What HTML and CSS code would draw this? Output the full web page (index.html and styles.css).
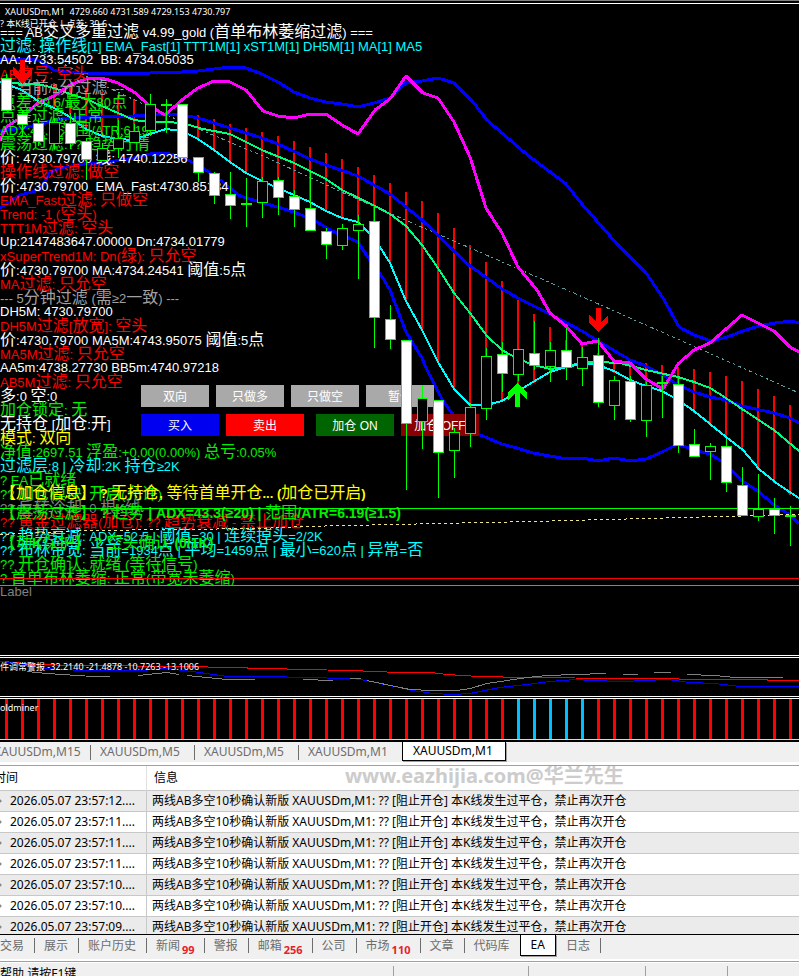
FILE: index.html
```html
<!DOCTYPE html>
<html lang="zh-CN">
<head>
<meta charset="utf-8">
<title>XAUUSDm,M1</title>
<link rel="stylesheet" href="styles.css">
</head>
<body>
<main class="charts">
  <section class="pane pane-price">
    <svg class="layer" id="lines" aria-hidden="true"></svg>
    <ul class="log">
      <li>=== AB交叉多重过滤 v4.99_gold (首单布林萎缩过滤) ===</li>
      <li class="cyan">过滤: 操作线[1] EMA_Fast[1] TTT1M[1] xST1M[1] DH5M[1] MA[1] MA5</li>
      <li>AA: 4733.54502  BB: 4734.05035</li>
      <li class="red">AB信号: 空头</li>
      <li class="gray">--- 当前/1分过滤 ---</li>
      <li class="green">点差:39.6/最大80点</li>
      <li class="green">点差过滤: 正常</li>
      <li class="green">ADX:43.3 范围/ATR:6.19</li>
      <li class="green">震荡过滤:?? 趋势行情</li>
      <li>价: 4730.79700 线: 4740.12256</li>
      <li class="red">操作线过滤: 做空</li>
      <li>价:4730.79700  EMA_Fast:4730.85184</li>
      <li class="red">EMA_Fast过滤: 只做空</li>
      <li class="red">Trend: -1 (空头)</li>
      <li class="red">TTT1M过滤: 空头</li>
      <li>Up:2147483647.00000 Dn:4734.01779</li>
      <li class="red">xSuperTrend1M: Dn(绿): 只允空</li>
      <li>价:4730.79700 MA:4734.24541 阈值:5点</li>
      <li class="red">MA过滤: 只允空</li>
      <li class="gray">--- 5分钟过滤 (需≥2一致) ---</li>
      <li>DH5M: 4730.79700</li>
      <li class="red">DH5M过滤[放宽]: 空头</li>
      <li>价:4730.79700 MA5M:4743.95075 阈值:5点</li>
      <li class="red">MA5M过滤: 只允空</li>
      <li>AA5m:4738.27730 BB5m:4740.97218</li>
      <li class="red">AB5M过滤: 只允空</li>
      <li>多:0 空:0</li>
      <li class="green">加仓锁定: 无</li>
      <li>无持仓 [加仓:开]</li>
      <li class="yellow">模式: 双向</li>
      <li class="green">净值:2697.51 浮盈:+0.00(0.00%) 总亏:0.05%</li>
      <li class="cyan">过滤层:8 | 冷却:2K 持仓≥2K</li>
      <li class="green">? EA已就绪</li>
      <li class="green">?? 加仓模块: 开启(允许)</li>
      <li class="dim">?? 反转冷却: 0 根K线</li>
      <li class="red">?? 黄金过滤器(加仓): ?? 趋势衰减 - 禁止加仓</li>
      <li class="cyan">?? 趋势衰减: ADX=52.5 | 阈值=30 | 连续掉头=2/2K</li>
      <li class="cyan">?? 布林带宽: 当前=1934点 | 平均=1459点 | 最小=620点 | 异常=否</li>
      <li class="green">?? 开仓确认: 就绪 (等待信号)</li>
      <li class="green">? 首单布林萎缩: 正常(带宽未萎缩)</li>
      <li class="dim">Label</li>
    </ul>
    <ul class="alerts">
      <li class="yellow">【加仓信息】 ? 无持仓, 等待首单开仓... (加仓已开启)</li>
      <li class="green">【震荡过滤】 ? 趋势 | ADX=43.3(≥20) | 范围/ATR=6.19(≥1.5)</li>
      <li class="green">【动K保护】 ? 空头确认 (0/1K)</li>
    </ul>
    <div class="controls">
      <div class="row">
        <button type="button" class="btn mode">双向</button>
        <button type="button" class="btn mode">只做多</button>
        <button type="button" class="btn mode">只做空</button>
        <button type="button" class="btn mode">暂停</button>
      </div>
      <div class="row">
        <button type="button" class="btn buy">买入</button>
        <button type="button" class="btn sell">卖出</button>
        <button type="button" class="btn on">加仓 ON</button>
        <button type="button" class="btn off">加仓 OFF</button>
      </div>
    </div>
    <svg class="layer" id="candles" aria-hidden="true"></svg>
    <div class="heading">
      <p class="quote">XAUUSDm,M1&nbsp; 4729.660 4731.589 4729.153 4730.797</p>
      <p class="note">? 本K线已开仓 | 点差: 39.6</p>
    </div>
  </section>
  <section class="pane pane-osc">
    <svg class="layer" id="osc" aria-hidden="true"></svg>
    <p class="caption">件调常警报 -32.2140 -21.4878 -10.7263 -13.1006</p>
  </section>
  <section class="pane pane-bars">
    <svg class="layer" id="bars" aria-hidden="true"></svg>
    <p class="caption bars-name">oldminer</p>
  </section>
</main>

<nav class="chart-tabs">
  <button type="button">XAUUSDm,M15</button>
  <button type="button">XAUUSDm,M5</button>
  <button type="button">XAUUSDm,M5</button>
  <button type="button" class="last">XAUUSDm,M1</button>
  <button type="button" class="active">XAUUSDm,M1</button>
</nav>

<section class="terminal">
  <table>
    <thead><tr><th class="time">时间</th><th>信息</th></tr></thead>
    <tbody>
      <tr><td class="time">2026.05.07 23:57:12....</td><td>两线AB多空10秒确认新版 XAUUSDm,M1: ?? [阻止开仓] 本K线发生过平仓，禁止再次开仓</td></tr>
      <tr><td class="time">2026.05.07 23:57:11....</td><td>两线AB多空10秒确认新版 XAUUSDm,M1: ?? [阻止开仓] 本K线发生过平仓，禁止再次开仓</td></tr>
      <tr><td class="time">2026.05.07 23:57:11....</td><td>两线AB多空10秒确认新版 XAUUSDm,M1: ?? [阻止开仓] 本K线发生过平仓，禁止再次开仓</td></tr>
      <tr><td class="time">2026.05.07 23:57:11....</td><td>两线AB多空10秒确认新版 XAUUSDm,M1: ?? [阻止开仓] 本K线发生过平仓，禁止再次开仓</td></tr>
      <tr><td class="time">2026.05.07 23:57:10....</td><td>两线AB多空10秒确认新版 XAUUSDm,M1: ?? [阻止开仓] 本K线发生过平仓，禁止再次开仓</td></tr>
      <tr><td class="time">2026.05.07 23:57:10....</td><td>两线AB多空10秒确认新版 XAUUSDm,M1: ?? [阻止开仓] 本K线发生过平仓，禁止再次开仓</td></tr>
      <tr><td class="time">2026.05.07 23:57:09....</td><td>两线AB多空10秒确认新版 XAUUSDm,M1: ?? [阻止开仓] 本K线发生过平仓，禁止再次开仓</td></tr>
    </tbody>
  </table>
  <p class="watermark">www.eazhijia.com@华兰先生</p>
</section>

<nav class="terminal-tabs">
  <button type="button">交易</button>
  <button type="button">展示</button>
  <button type="button">账户历史</button>
  <button type="button">新闻<b>99</b></button>
  <button type="button">警报</button>
  <button type="button">邮箱<b>256</b></button>
  <button type="button">公司</button>
  <button type="button">市场<b>110</b></button>
  <button type="button">文章</button>
  <button type="button" class="last">代码库</button>
  <button type="button" class="active">EA</button>
  <button type="button">日志</button>
</nav>

<footer class="status">
  <span class="help">帮助,请按F1键</span>
  <span class="cell wide"></span>
  <span class="cell mid"></span>
  <span class="cell small"></span>
  <span class="cell"></span>
</footer>
<script src="chart.js"></script>
</body>
</html>
```
FILE: styles.css
```css
* { box-sizing: border-box; }

body {
  margin: 0;
  height: 100vh;
  display: flex;
  flex-direction: column;
  overflow: hidden;
  background: #f0f0f0;
  font: 12px/20px "Noto Sans", "Noto Sans CJK SC", sans-serif;
  color: #000;
}

p, ul { margin: 0; padding: 0; list-style: none; }

button {
  margin: 0;
  border: 0;
  padding: 0;
  font: inherit;
  white-space: nowrap;
}

/* Chart window */
.charts {
  flex: none;
  background: #000;
  border-top: 1px solid #808080;
  border-bottom: 2px solid #000;
  padding-top: 2px;
}

.pane {
  position: relative;
  overflow: hidden;
  border-top: 1px solid #fff;
  border-bottom: 1px solid #fff;
  margin-bottom: 1px;
  color: #fff;
}

.pane-price { height: 653px; }
.pane-osc { height: 40px; }
.pane-bars { height: 42px; margin-bottom: 0; border-bottom-color: #d8d8d8; }

.layer {
  position: absolute;
  inset: 0;
  width: 100%;
  height: 100%;
  pointer-events: none;
  shape-rendering: crispEdges;
}

.heading {
  position: absolute;
  top: 2px;
  left: 0;
  font-size: 9px;
  line-height: 12px;
  white-space: nowrap;
}

.quote { padding-left: 5px; }

.log, .alerts {
  position: absolute;
  left: 0;
  top: 21px;
  font: 13px/14px "Liberation Sans", "Noto Sans CJK SC", sans-serif;
}

.log li, .alerts li { white-space: pre; }
.log li { height: 14px; }

.alerts {
  top: 482px;
  font-weight: bold;
}

.alerts li { height: 20px; }
.alerts .green { font-size: 14px; }
.alerts li:last-child { margin-top: 10px; }

.log .han, .alerts .han { font-size: 16px; font-weight: normal; }

.cyan { color: #00ffff; }
.red { color: #ff0000; }
.green { color: #00f000; }
.yellow { color: #ffff00; }
.gray { color: #a0a0a0; }
.dim { color: #808080; }

.controls {
  position: absolute;
  left: 141px;
  top: 381px;
  display: grid;
  gap: 7px;
}

.row { display: flex; gap: 7px; }

.btn {
  width: 78px;
  height: 22px;
  padding-top: 2px;
  color: #fff;
  font: 12px/20px "Liberation Sans", "Noto Sans CJK SC", sans-serif;
}

.mode { width: 68px; background: #a9a9a9; }
.buy { background: #0000f0; }
.sell { background: #ff0000; }
.on { background: #006400; margin-left: 5px; }
.off { background: #8b0000; }

.caption {
  position: relative;
  font-size: 9px;
  line-height: 18px;
  white-space: nowrap;
}

/* Chart tabs */
.chart-tabs {
  flex: none;
  display: flex;
  height: 24px;
  margin-left: -14px;
  border-bottom: 1px solid #a0a0a0;
  box-shadow: inset 0 -3px #fff;
}

.chart-tabs button {
  position: relative;
  width: 104px;
  height: 19px;
  padding-left: 10px;
  background: none;
  color: #6d6d6d;
  line-height: 18px;
  text-align: left;
}

.chart-tabs button:first-child { padding-left: 8px; }

.chart-tabs button:not(.active)::after,
.terminal-tabs button:not(.active)::after {
  content: "";
  position: absolute;
  right: -1px;
  top: 3px;
  height: 15px;
  border-right: 1px solid #6d6d6d;
}

.chart-tabs .last::after, .terminal-tabs .last::after { display: none; }

.chart-tabs .active, .terminal-tabs .active {
  background: #fff;
  color: #000;
  border: solid #000;
  border-width: 0 1px 1px;
  box-shadow: 1px 1px #a0a0a0;
}

/* Terminal */
.terminal {
  position: relative;
  flex: 1;
  min-height: 0;
  overflow: hidden;
  background: #fff;
  border-bottom: 1px solid #000;
}

table {
  width: 100%;
  border-collapse: separate;
  border-spacing: 0;
  table-layout: fixed;
}

th, td {
  height: 21px;
  padding: 0 5px;
  border-bottom: 1px solid #c8c8c8;
  font-weight: normal;
  text-align: left;
  line-height: 20px;
  white-space: nowrap;
}

th { height: 25px; padding-left: 7px; }

.time { width: 147px; border-right: 1px solid #c8c8c8; }
td.time {
  padding-left: 10px;
  background: radial-gradient(circle at 0 50%, #888 1px, transparent 2px);
}
th.time { padding-left: 0; text-indent: -6px; border-right-color: #e0e0e0; }

tbody tr:nth-child(odd) { background: #ebebeb; }

.watermark {
  position: absolute;
  left: 345px;
  top: 0;
  color: #ccc;
  font-size: 20px;
  font-weight: bold;
  line-height: 20px;
}

.terminal-tabs {
  flex: none;
  display: flex;
  height: 27px;
  margin-left: -10px;
  border-bottom: 1px solid #a0a0a0;
  box-shadow: inset 0 -2px #fff;
}

.terminal-tabs button {
  position: relative;
  height: 21px;
  padding: 0 10px;
  background: none;
  color: #6d6d6d;
  line-height: 20px;
}

.terminal-tabs b {
  position: relative;
  top: 4px;
  margin: 0 -1px 0 2px;
  color: #e8202a;
  font-size: 11px;
  line-height: 10px;
}

.status {
  flex: none;
  display: flex;
  height: 14px;
  overflow: hidden;
  border-top: 1px solid #fff;
}

.help { flex: 0 0 393px; line-height: 22px; }
.cell { flex: 1; margin-top: 3px; border-left: 1px solid #a0a0a0; }
.wide { flex: 0 0 135px; }
.mid { flex: 0 0 117px; }
.small { flex: 0 0 82px; }
```
FILE: chart.js
```js
// Wrap runs of Chinese characters so they can take a larger size than the Latin text.
document.querySelectorAll('.log li, .alerts li').forEach(function (li) {
  li.innerHTML = li.innerHTML.replace(/[\u4e00-\u9fff\u3010\u3011]+/g, '<span class="han">$&</span>');
});

const NS = 'http://www.w3.org/2000/svg';

function add(parent, tag, attrs) {
  const el = document.createElementNS(NS, tag);
  for (const key in attrs) el.setAttribute(key, attrs[key]);
  parent.appendChild(el);
  return el;
}

// Series are stored in window coordinates; each pane's group shifts them to its own origin.
function group(id, top) {
  return add(document.getElementById(id), 'g', { transform: 'translate(0 ' + -top + ')' });
}

function line(g, points, color, width, dash) {
  const a = { points: points, fill: 'none', stroke: color, 'stroke-width': width, 'stroke-linejoin': 'round' };
  if (dash) a['stroke-dasharray'] = dash;
  add(g, 'polyline', a);
}

const back = group('lines', 4);

// Histogram between the fast and slow averages: x, top, bottom
[[22,82,88],[38,83,101],[54,83,107],[70,87,115],[86,88,129],[102,92,136],[118,95,139],[134,99,139],[150,107,135],
 [166,112,128],[182,112,130],[198,115,139],[214,119,150],[230,124,162],[246,128,174],[262,132,181],[278,136,188],
 [294,141,195],[310,147,202],[326,153,212],[342,159,218],[358,167,222],[374,175,240],[390,183,263],[406,192,300],
 [422,201,331],[438,213,363],[454,228,390],[470,245,405],[486,262,405],[502,281,402],[518,300,392],[534,314,383],
 [550,327,372],[566,340,367],[582,345,364],[598,353,366],[614,360,373],[630,365,380],[646,363,386],[662,365,391],
 [678,367,400],[694,369,413],[710,372,425],[726,376,438],[742,381,451],[758,389,470],[774,396,483],[790,405,495]
].forEach(b => add(back, 'rect', { x: b[0] - 1, y: b[1], width: 2, height: b[2] - b[1], fill: '#f00' }));

line(back, '16,40 60,62 90,78 107,87 182,122 270,159 350,196 447,238 567,290 799,393', '#5f9ea0', 1, '4 3 2 3');

const BLUE = '#0000ff';
line(back, '0,59 38,60 54,70 70,72 86,73 134,74 150,73 182,72 198,71 214,69 230,67 246,68 262,74 278,82 294,92 310,98 326,102 342,104 358,107 374,103 390,98 406,83 422,81 438,78 454,83 473,102 487,120 518,147 530,157 565,183 582,204 617,244 646,273 663,298 679,327 694,335 711,341 727,337 743,331 759,326 775,323 791,321 799,323', BLUE, 3);
line(back, '0,131 22,128 38,125 54,120 70,118 102,117 134,116 166,114 182,115 198,118 214,123 230,128 246,133 262,138 278,144 310,159 326,165 358,176 390,194 406,207 422,220 454,251 470,266 487,278 502,289 518,298 550,314 582,331 598,341 630,360 646,366 663,375 678,385 694,392 710,397 726,400 742,406 774,413 790,418 799,423', BLUE, 3);
line(back, '0,208 20,195 40,190 50,172 60,168 83,164 103,163 134,158 150,154 166,153 182,157 200,166 220,180 240,196 267,204 294,212 317,222 332,231 358,242 369,259 381,275 390,290 406,332 422,358 427,370 442,399 451,412 466,428 480,435 502,444 520,449 533,453 550,456 566,459 582,458 598,461 614,458 630,461 646,459 662,452 678,444 694,450 710,454 726,464 742,481 758,491 774,505 790,515 799,524', BLUE, 3);
line(back, '8,82 22,84 38,84 54,88 70,94 86,99 102,106 118,113 134,120 150,122 166,122 182,123 203,129 230,134 246,142 262,150 294,163 326,179 342,190 375,206 390,214 406,226 422,245 438,268 454,293 470,313 487,336 502,350 518,359 534,365 550,369 566,367 582,362 598,362 620,363 646,370 678,377 694,382 710,388 726,398 742,409 774,430 799,451', '#00ff7f', 2);
line(back, '0,82 22,90 38,101 54,108 70,117 86,129 102,136 118,139 134,140 150,134 166,129 182,131 198,139 214,150 230,162 246,173 262,181 278,188 294,195 310,202 326,211 342,218 358,222 369,233 380,247 390,263 406,301 422,330 438,362 454,389 470,405 487,405 502,401 518,391 533,382 550,372 566,367 582,364 595,364 614,371 630,380 646,386 662,391 678,400 694,411 710,424 726,437 743,450 759,469 775,482 791,493 799,498', '#00ffff', 2);
line(back, '0,141 6,127 22,117 38,103 54,96 70,85 86,79 102,78 118,83 134,92 150,106 165,115 182,100 198,88 214,81 230,82 246,90 263,111 278,116 294,118 310,114 326,114 342,125 358,134 375,110 390,99 406,76 423,93 438,98 454,122 470,157 486,208 502,233 518,267 537,290 550,313 566,326 582,344 598,341 614,361 630,363 646,379 663,389 678,364 694,350 710,343 742,315 774,331 790,347 799,352', '#ff00ff', 3);

const front = group('candles', 4);

// Price levels
line(front, '0,508.5 4000,508.5', '#00ff00', 1);
line(front, '0,534.5 90,530.5 260,528.5 303,526.5 530,521.5 799,514.5', '#f0e68c', 1, '3 3');
line(front, '0,578.5 4000,578.5', '#ff0000', 1);
line(front, '0,585.5 4000,585.5', '#778899', 1);

// Candles: x, high, body top, body bottom, low, filled (equal body edges draw a doji)
[[6,74,78,110,110,1],[22,110,114,124,135,1],[38,118,123,141,145,1],[54,118,122,143,148,0],[70,113,123,143,148,1],
 [86,138,141,159,179,1],[102,143,148,160,160,0],[118,120,138,148,157,0],[134,124,131,142,142,0],[150,94,104,130,135,0],
 [166,99,105,105,132,0],[182,104,104,157,157,1],[198,157,157,172,181,1],[214,172,173,195,203,1],[230,172,194,205,218,1],
 [246,178,204,204,226,0],[262,177,181,202,217,0],[278,177,180,197,214,1],[294,190,196,209,226,1],[310,172,208,230,230,1],
 [326,228,231,244,258,1],[342,224,228,245,249,0],[358,215,224,230,278,0],[374,206,221,317,347,1],[390,305,319,339,348,1],
 [406,340,340,423,489,1],[422,385,398,421,448,0],[438,400,400,452,497,1],[454,428,432,450,477,0],[470,403,407,433,446,0],
 [486,348,356,408,419,0],[502,342,354,373,391,1],[518,349,349,374,380,0],[534,321,353,365,369,1],[550,342,350,366,381,0],
 [566,328,350,367,379,1],[582,347,357,368,385,0],[598,338,355,402,406,1],[614,376,380,405,419,0],[630,376,381,419,421,1],
 [646,382,385,420,436,0],[662,376,383,383,417,0],[678,377,384,445,452,1],[694,429,444,456,456,1],[710,443,446,451,479,0],
 [726,439,446,482,491,1],[742,467,485,515,515,1],[758,474,509,516,520,0],[774,498,509,515,533,1],[790,506,516,516,545,0]
].forEach(function (c) {
  const [x, high, top, bottom, low, filled] = c;
  add(front, 'rect', { x: x, y: high, width: 1, height: low - high + 1, fill: '#00ff00' });
  if (top === bottom) {
    add(front, 'rect', { x: x - 5, y: top - 1, width: 11, height: 2, fill: '#00ff00' });
  } else {
    add(front, 'rect', { x: x - 4.5, y: top + 0.5, width: 10, height: bottom - top,
      fill: filled ? '#fff' : '#000', stroke: '#00ff00', 'stroke-width': 1 });
  }
});

// Signal arrows, drawn from the tip
function arrow(x, y, dir, color) {
  add(front, 'path', { fill: color, transform: 'translate(' + x + ' ' + y + ') scale(1 ' + dir + ')',
    d: 'M0.5 0L10 -9V-17L3 -10V-24H-2V-10L-9 -17V-9Z' });
}
arrow(22, 84, 1, '#ff0000');
arrow(598, 332, 1, '#ff0000');
arrow(517, 383, -1, '#00ff00');

const osc = group('osc', 658);
const GRAY = '#808080';
line(osc, '0,661 33,664.5 80,665.5 193,666.5 223,667.5 271,668.5 303,669.5 351,670.5 399,672.5 431,672.5 447,674.5 479,676.5 527,677.5 623,678.5 735,679.5 799,680.5', '#ff0000', 1);
line(osc, '0,661.5 20,663.5 43,668.5 83,670.5 140,670.5 167,668.5 200,672.5 227,676.5 247,676.5 271,676.5 303,677.5 350,678.5 361,679.5 399,687.5 412,690.5 433,693.5 452,694.5 470,693.5 500,687.5 527,684.5 550,681.5 575,679.5 591,680.5 623,681.5 667,679.5 690,682.5 715,683.5 740,686.5 799,686.5', BLUE, 1);
['27,671.5 47,673.5 93,676.5 110,676.5', '138,675.5 167,672.5 179,674.5', '187,675.5 227,679.5 255,679.5',
 '303,679.5 333,680.5', '350,678.5 361,678.5', '367,680.5 400,687.5 410,689.5 431,690.5 457,690.5 470,688.5 487,683.5 507,680.5 527,677.5 547,675.5 575,674.5 606,673.5',
 '623,674.5 638,674.5', '654,672.5 671,672.5', '687,674.5 715,675.5 735,677.5 783,677.5'
].forEach(p => line(osc, p, GRAY, 1));

const bars = group('bars', 0);
for (let i = 0; i < 50; i++) {
  add(bars, 'rect', { x: 5 + i * 16, y: 0, width: 3, height: 40, fill: i >= 32 && i <= 36 ? '#00bfff' : '#ff0000' });
}
```
